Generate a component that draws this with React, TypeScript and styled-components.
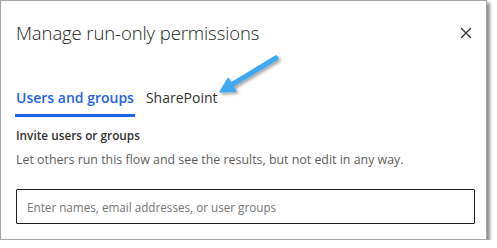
import styled, { createGlobalStyle } from 'styled-components'

const GlobalStyle = createGlobalStyle`
  html, body {
    margin: 0;
    padding: 0;
    background: #ffffff;
  }
  body {
    font-family: 'Open Sans', 'Noto Sans', 'Liberation Sans', sans-serif;
    color: #323130;
  }
`

const tabs = ['Users and groups', 'SharePoint']

const App = () => {
  return (
    <>
      <GlobalStyle />
      <Frame>
        <Header>
          <Title>Manage run-only permissions</Title>
          <CloseButton aria-label="Close">
            <svg width="12" height="12" viewBox="0 0 12 12">
              <path d="M1 1 L11 11 M11 1 L1 11" stroke="#323130" strokeWidth="1.3" fill="none" />
            </svg>
          </CloseButton>
        </Header>
        <TabBar>
          {tabs.map((t, i) => (
            <Tab key={t} $active={i === 0}>
              {t}
            </Tab>
          ))}
          <Pointer width="70" height="50" viewBox="0 0 70 50">
            <defs>
              <filter id="sh" x="-20%" y="-20%" width="150%" height="150%">
                <feDropShadow dx="2" dy="2" stdDeviation="1.5" floodColor="#000" floodOpacity="0.35" />
              </filter>
            </defs>
            <g filter="url(#sh)">
              <path d="M59 6 L16 32" stroke="#40a8f0" strokeWidth="5" strokeLinecap="round" fill="none" />
              <path d="M3 40 L11.2 26.5 L18.8 38.9 Z" fill="#40a8f0" stroke="#40a8f0" strokeWidth="1.5" strokeLinejoin="round" />
            </g>
          </Pointer>
        </TabBar>
        <Section>
          <Label>Invite users or groups</Label>
          <Hint>Let others run this flow and see the results, but not edit in any way.</Hint>
          <SearchInput type="text" placeholder="Enter names, email addresses, or user groups" />
        </Section>
      </Frame>
    </>
  )
}

export default App

const Frame = styled.div`
  box-sizing: border-box;
  width: 487px;
  height: 240px;
  border: 1px solid #a6a6a6;
  box-shadow: 3px 3px 3px rgba(0, 0, 0, 0.45);
  background: #fff;
  padding: 0 13px 0 14px;
`

const Header = styled.div`
  display: flex;
  justify-content: space-between;
  align-items: center;
  height: 64px;
`

const Title = styled.h1`
  margin: 0 0 0 1px;
  font-size: 18.5px;
  line-height: 24px;
  font-weight: 300;
  color: #201f1e;
  letter-spacing: -0.1px;
`

const CloseButton = styled.button`
  border: 0;
  background: none;
  padding: 0;
  width: 16px;
  height: 16px;
  display: flex;
  align-items: center;
  justify-content: center;
  margin-right: -1px;
`

const TabBar = styled.div`
  position: relative;
  display: flex;
  gap: 10px;
  margin-top: 23px;
`

const Tab = styled.div<{ $active?: boolean }>`
  font-size: 14px;
  line-height: 20px;
  font-weight: ${(p) => (p.$active ? 600 : 400)};
  color: ${(p) => (p.$active ? '#1f63e8' : '#323130')};
  padding: 0 1px 6px;
  border-bottom: 3px solid ${(p) => (p.$active ? '#1f63e8' : 'transparent')};
`

const Pointer = styled.svg`
  position: absolute;
  left: 202px;
  top: -36px;
  overflow: visible;
`

const Section = styled.div`
  display: flex;
  flex-direction: column;
  margin: 10px 0 0 1px;
`

const Label = styled.div`
  font-size: 11.8px;
  line-height: 16px;
  font-weight: 600;
  color: #323130;
`

const Hint = styled.div`
  font-size: 12.4px;
  line-height: 18px;
  color: #605e5c;
  margin-top: 8px;
`

const SearchInput = styled.input`
  box-sizing: border-box;
  margin-top: 20px;
  width: 459px;
  height: 35px;
  border: 1px solid #201f1e;
  border-radius: 1px;
  padding: 0 10px;
  font-family: inherit;
  font-size: 11.7px;
  outline: none;

  ::placeholder {
    color: #605e5c;
  }
`
